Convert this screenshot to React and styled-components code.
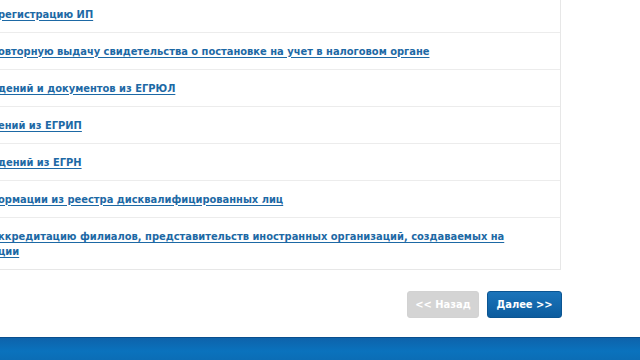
import styled, { createGlobalStyle } from "styled-components";

const GlobalStyle = createGlobalStyle`
  html, body {
    margin: 0;
    padding: 0;
    background: #fff;
    overflow: hidden;
  }
  body {
    font-family: "DejaVu Sans Condensed", "DejaVu Sans", Verdana, sans-serif;
  }
`;

const Page = styled.div`
  width: 640px;
  height: 360px;
  display: flex;
  flex-direction: column;
  overflow: hidden;
`;

const Content = styled.div`
  flex: 1;
  display: flex;
  flex-direction: column;
`;

const ServiceList = styled.ul`
  list-style: none;
  margin: -4px 0 0 -2px;
  padding: 0;
  width: 563px;
  border-right: 1px solid #e7e7e7;
  border-bottom: 1px solid #e7e7e7;
  box-sizing: border-box;
`;

const Row = styled.li`
  display: flex;
  align-items: center;
  min-height: 37px;
  padding: ${(p) => (p.$tall ? "11px 0 10px" : "0")};
  box-sizing: border-box;
  border-bottom: 1px solid #ececec;
  &:last-child {
    border-bottom: none;
  }
`;

const Link = styled.a`
  color: #1d69a5;
  font-size: 11px;
  font-weight: bold;
  line-height: 15px;
  text-decoration: underline;
  text-decoration-thickness: 1px;
  text-underline-offset: 2px;
  white-space: nowrap;
  cursor: pointer;
`;

const Actions = styled.div`
  display: flex;
  justify-content: flex-end;
  gap: 8px;
  width: 562px;
  margin-top: 21px;
`;

const Button = styled.button`
  height: 27px;
  padding: 0;
  width: ${(p) => p.$w}px;
  border-radius: 3px;
  font-family: "DejaVu Sans Condensed", "DejaVu Sans", sans-serif;
  font-size: 11px;
  font-weight: bold;
  color: #fff;
  border: 1px solid ${(p) => (p.$primary ? "#0b5592" : "#d2d2d2")};
  background: ${(p) =>
    p.$primary ? "linear-gradient(#1b74ba, #0c5c9e)" : "#d4d4d4"};
  cursor: ${(p) => (p.$primary ? "pointer" : "default")};
`;

const Footer = styled.footer`
  height: 22px;
  border-top: 1px solid #0a4f8e;
  background: linear-gradient(#0e63ab, #0a72bd 60%, #0b6db5);
`;

const items = [
  "регистрацию ИП",
  "овторную выдачу свидетельства о постановке на учет в налоговом органе",
  "дений и документов из ЕГРЮЛ",
  "ений из ЕГРИП",
  "дений из ЕГРН",
  "ормации из реестра дисквалифицированных лиц",
];

export default function App() {
  return (
    <>
      <GlobalStyle />
      <Page>
        <Content>
          <ServiceList>
            {items.map((t) => (
              <Row key={t}>
                <Link>{t}</Link>
              </Row>
            ))}
            <Row $tall>
              <Link>
                ккредитацию филиалов, представительств иностранных организаций,
                создаваемых на
                <br />
                ции
              </Link>
            </Row>
          </ServiceList>
          <Actions>
            <Button $w={72} disabled>
              &lt;&lt; Назад
            </Button>
            <Button $w={75} $primary>
              Далее &gt;&gt;
            </Button>
          </Actions>
        </Content>
        <Footer />
      </Page>
    </>
  );
}
